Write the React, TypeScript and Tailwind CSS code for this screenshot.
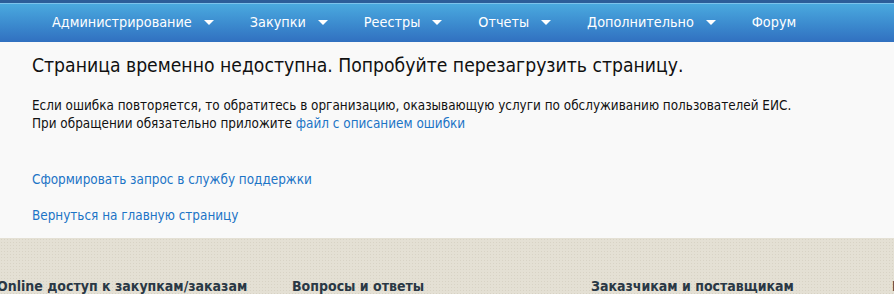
const font = { fontFamily: '"DejaVu Sans Condensed", "DejaVu Sans", sans-serif' };

const menu = [
  { label: "Администрирование", caret: true },
  { label: "Закупки", caret: true },
  { label: "Реестры", caret: true },
  { label: "Отчеты", caret: true },
  { label: "Дополнительно", caret: true },
  { label: "Форум", caret: false },
];

function Caret() {
  return (
    <svg width="10" height="5" viewBox="0 0 10 5" className="ml-[12px]">
      <path d="M0 0h10L5 5z" fill="#fff" />
    </svg>
  );
}

export default function App() {
  return (
    <div className="w-[894px] h-[294px] overflow-hidden bg-[#f9f9f9]" style={font}>
      <div className="h-[3px] bg-[#2c5d99]" />
      <div className="h-[1px] bg-[#7cc3ec]" />
      <nav className="h-[38px] bg-gradient-to-b from-[#4aa9df] to-[#3170c0] flex items-center pl-[52px] gap-[36px] text-white text-[14.3px] pb-[1px]">
        {menu.map((m) => (
          <div key={m.label} className="flex items-center">
            <span>{m.label}</span>
            {m.caret && <Caret />}
          </div>
        ))}
      </nav>
      <main className="h-[196px] pl-[32px] pt-[10px]">
        <h1 className="text-[19.2px] text-[#111] leading-[28px]">
          Страница временно недоступна. Попробуйте перезагрузить страницу.
        </h1>
        <p className="mt-[17px] text-[13.4px] leading-[18px] text-[#111]">
          Если ошибка повторяется, то обратитесь в организацию, оказывающую услуги по обслуживанию пользователей ЕИС.
          <br />
          При обращении обязательно приложите <a className="text-[#1c74c6]">файл с описанием ошибки</a>
        </p>
        <div className="mt-[38px] flex flex-col gap-[18px] text-[13.4px] leading-[18px] text-[#1c74c6]">
          <a>Сформировать запрос в службу поддержки</a>
          <a>Вернуться на главную страницу</a>
        </div>
      </main>
      <footer className="h-[56px] bg-[#e4e0d4] bg-[radial-gradient(#d8d3c5_1px,transparent_1px)] bg-[length:3px_3px]">
        <div className="flex pt-[38px] text-[14px] font-bold text-[#2a3845] whitespace-nowrap">
          <div className="w-[295px] shrink-0 ml-[-3px]">Online доступ к закупкам/заказам</div>
          <div className="w-[299px] shrink-0">Вопросы и ответы</div>
          <div className="w-[301px] shrink-0">Заказчикам и поставщикам</div>
          <div className="shrink-0">Портал</div>
        </div>
      </footer>
    </div>
  );
}
